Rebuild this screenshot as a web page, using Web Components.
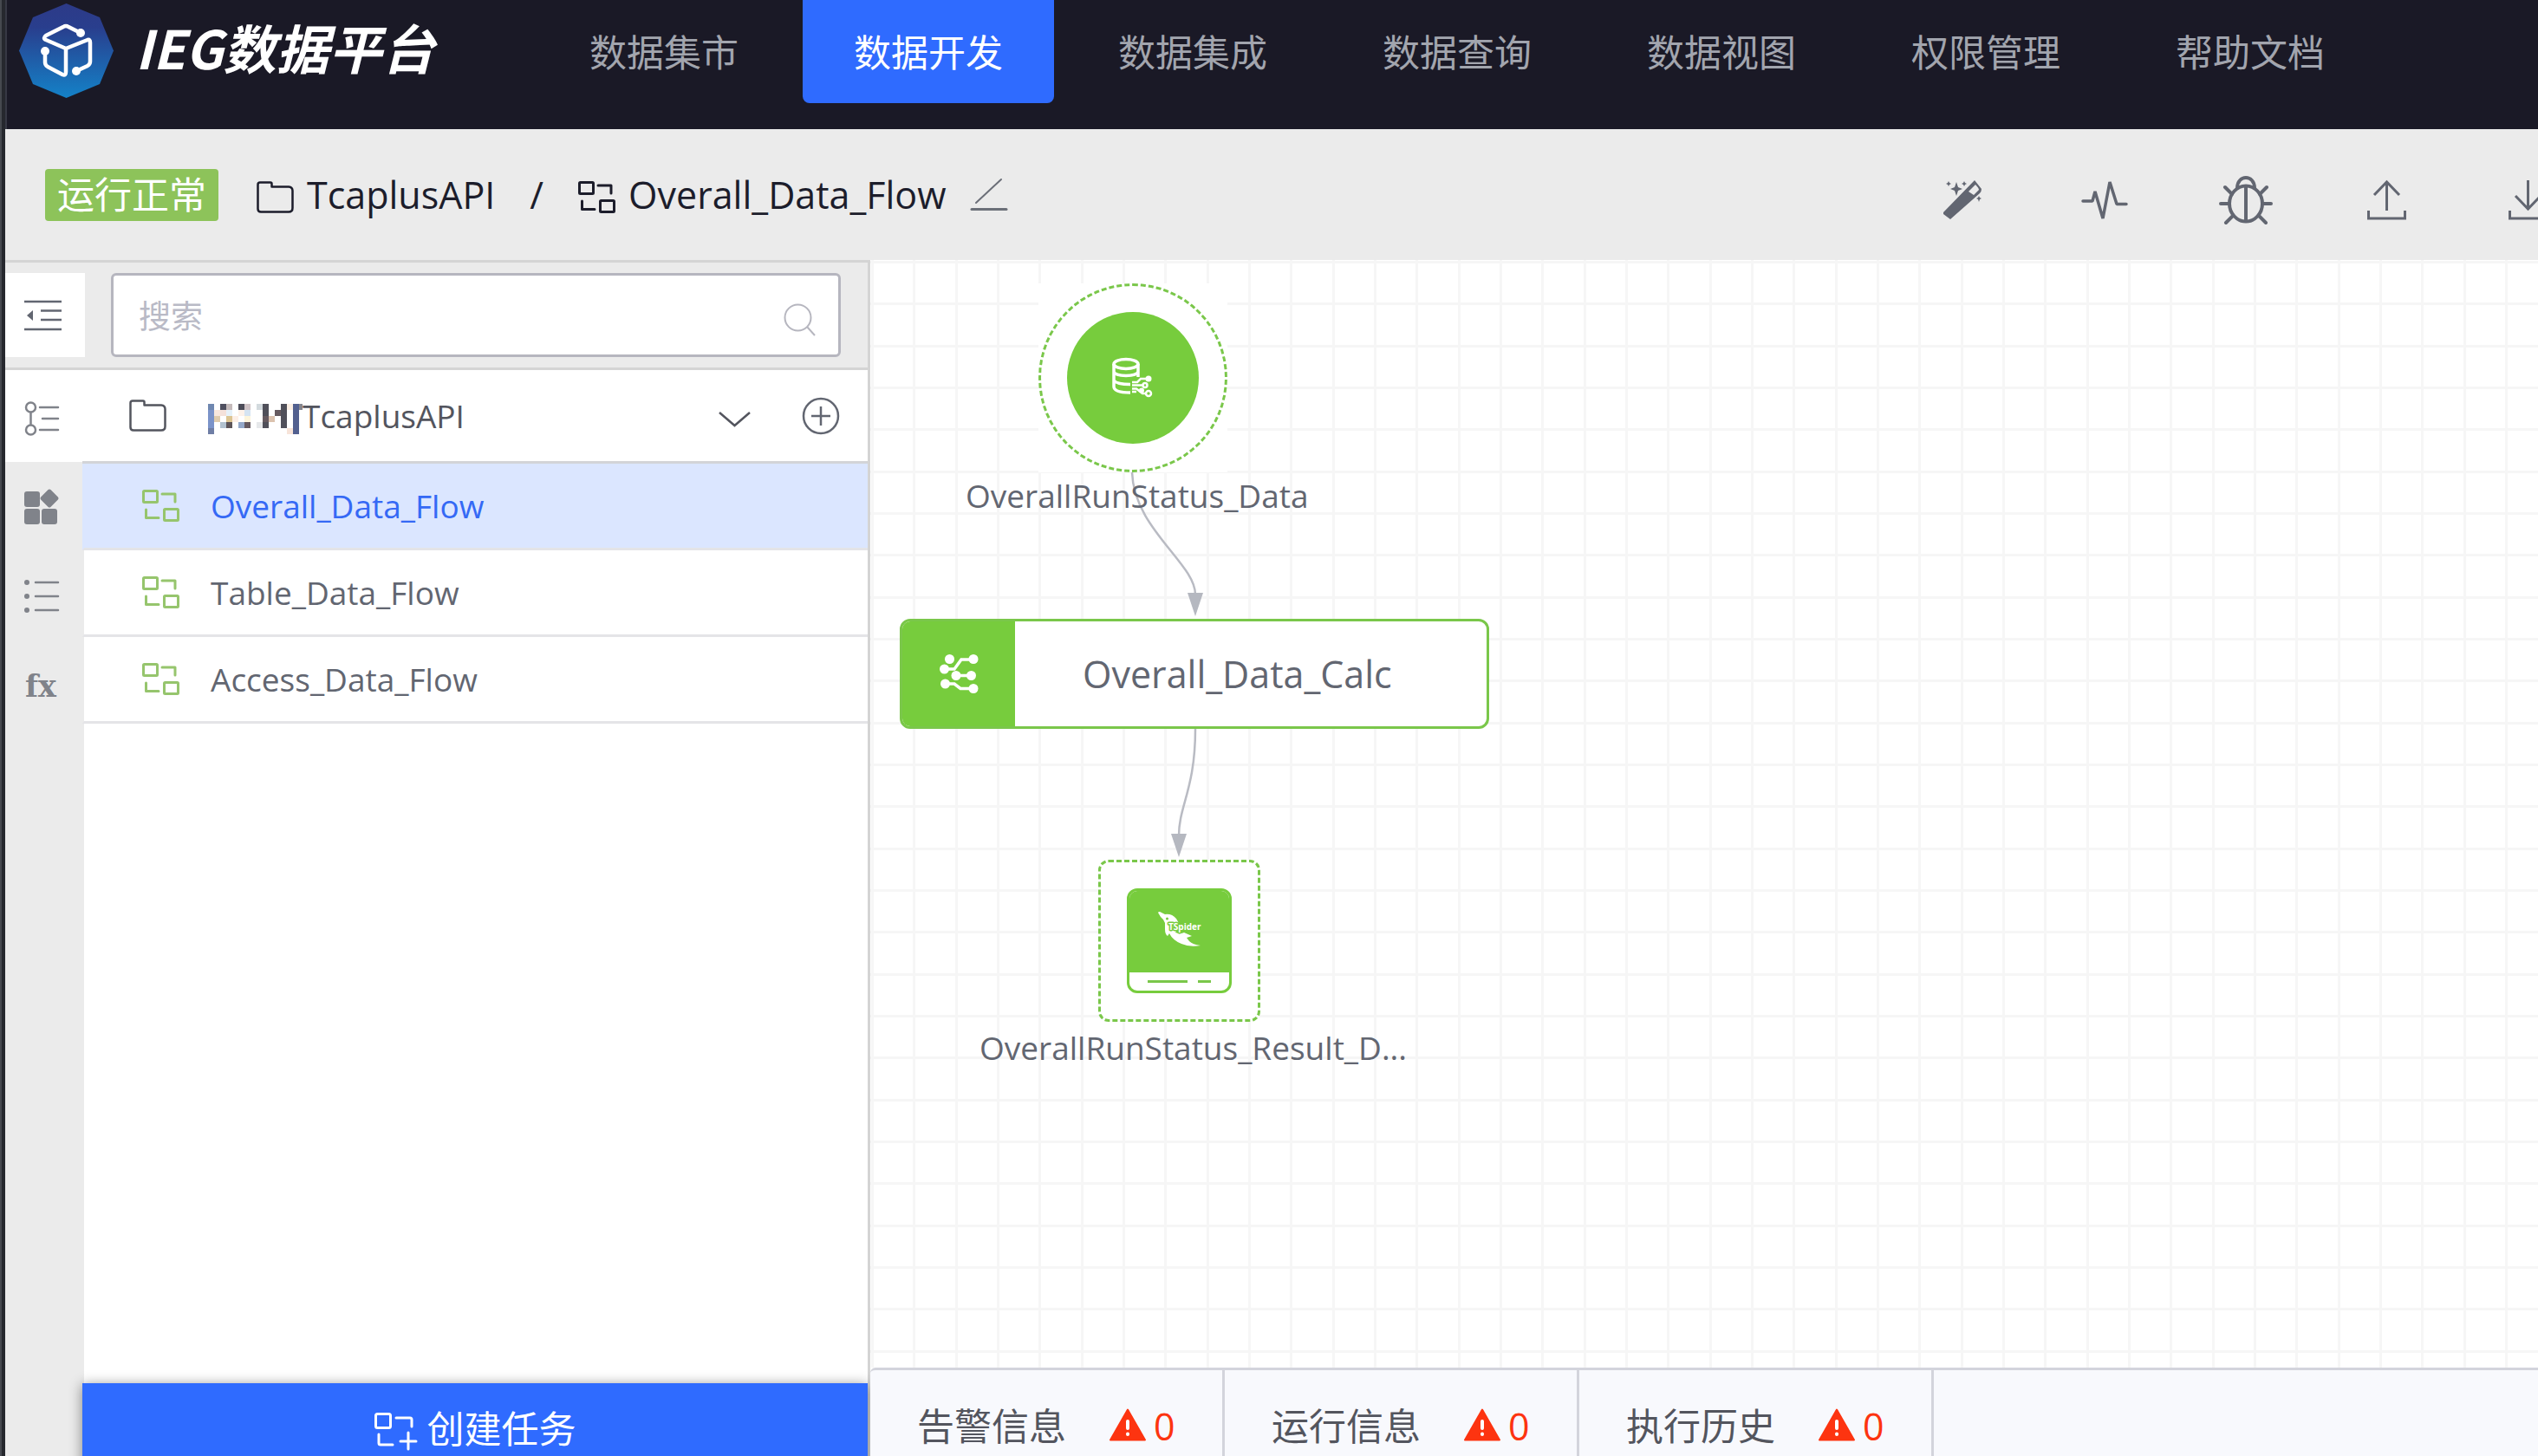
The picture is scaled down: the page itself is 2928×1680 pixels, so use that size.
<!DOCTYPE html>
<html lang="zh-CN">
<head>
<meta charset="utf-8">
<title>IEG数据平台</title>
<style>
  html, body { height: 100%; margin: 0; }
  body {
    box-sizing: border-box;
    padding-left: 6px;
    overflow: hidden;
    font-family: "Open Sans", "Noto Sans CJK SC", sans-serif;
    background: linear-gradient(90deg, #46494f 0 2px, #26282e 2px 6px, #ffffff 6px);
  }
</style>
</head>
<body>
<dp-app></dp-app>

<script>
const ICONS = {
  logo: [109, 109, `<defs><linearGradient id="g" x1="0" y1="0" x2="0" y2="1"><stop offset="0" stop-color="#2d3a88"/><stop offset=".25" stop-color="#293e8d"/><stop offset="1" stop-color="#1482c8"/></linearGradient></defs>
    <path fill="url(#g)" d="M54.500 0 93 16 109 54.500 93 93 54.500 109 16 93 0 54.500 16 16Z"/>
    <g fill="none" stroke="#fff" stroke-width="4.500" stroke-linejoin="round"><path d="M71 34 57 27Q54 25 51 27L31 37Q27 40 31 42L54 52 79 42Q82 41 82 45V67Q82 70 79 72L66 78"/><path d="M54 52V79Q54 84 50 82L33 73Q30 71 30 68V55"/></g>
    <g fill="#fff"><circle cx="71" cy="34" r="5"/><circle cx="30" cy="55" r="5"/><circle cx="66" cy="78" r="5"/></g>`],
  folder: [43, 37, `<path fill="none" stroke="currentColor" stroke-width="2.500" stroke-linejoin="round" d="M4 1.500H16Q17.500 1.500 17.500 3V6.500H37Q41.500 7 41.500 11V31Q41.500 35.500 37 35.500H5Q1.500 35.500 1.500 32V4Q1.500 1.500 4 1.500Z"/>`],
  flow: [43, 37, `<g fill="none" stroke="currentColor" stroke-width="3" stroke-linejoin="round" stroke-linecap="round"><rect x="1.500" y="1.500" width="16" height="13" rx="1"/><path d="M23 5H38V14M4.500 23V32.500H19"/><rect x="25.500" y="22.500" width="16" height="13" rx="1"/></g>`],
  flowadd: [49, 43, `<g fill="none" stroke="currentColor" stroke-width="3" stroke-linejoin="round" stroke-linecap="round"><rect x="1.500" y="1.500" width="17" height="16" rx="2"/><path d="M25 6H41Q43 6 43 8V16M5 25V35Q5 37 7 37H21M39 23V42M30 33H48"/></g>`],
  pen: [42, 37, `<g fill="none" stroke="#6b6f78" stroke-linecap="round"><path stroke-width="2" d="M6 28 35 1"/><path stroke-width="3" d="M1 35.500H41"/></g>`],
  wand: [45, 46, `<g fill="currentColor"><path fill-rule="evenodd" d="M36 0 44 10Q44 13 42 15L8 45 0 39 0 37ZM29 13 35 17 41 11Q41 9 37 5Z"/><path d="M15 2 17 8 22 10 17 12 15 18 13 12 8 10 13 8Z"/><path d="M6 1 7 3 9 4 7 5 6 7 5 5 3 4 5 3ZM24 1 25 3 27 4 25 5 24 7 23 5 21 4 23 3ZM41 18 42 20 44 21 42 22 41 25 40 22 38 21 40 20Z"/></g>`],
  pulse: [54, 48, `<path fill="none" stroke="currentColor" stroke-width="3.500" stroke-linejoin="bevel" stroke-linecap="round" d="M2 25H13L16 14 25 45 33 3 41 28.500H52"/>`],
  bug: [62, 56, `<g fill="none" stroke="currentColor" stroke-width="4" stroke-linecap="round"><ellipse cx="31" cy="32" rx="19" ry="20.500"/><path d="M31 12V52M21 14C21-2 41-2 41 14M2 32H11M51 32H60M7 13 15 21M55 13 47 21M8 54 16 46M54 54 46 46"/></g>`],
  upload: [45, 46, `<path fill="none" stroke="currentColor" stroke-width="3" d="M22.500 3V35M8 17 22.500 2 37 17M1.500 35V44H43.500V35"/>`],
  download: [45, 46, `<path fill="none" stroke="currentColor" stroke-width="3" d="M22.500 0V33M8 18 22.500 33 37 18M1.500 35V44H43.500V35"/>`],
  collapse: [43, 36, `<path fill="none" stroke="currentColor" stroke-width="2.500" d="M0 2H43M19 12.500H43M19 23H43M0 34H43"/><path fill="currentColor" d="M10 12V24L3 18Z"/>`],
  steps: [40, 40, `<g fill="none" stroke="currentColor" stroke-width="2.500"><circle cx="7.500" cy="7" r="5.500"/><circle cx="7.500" cy="33" r="5.500"/><path stroke-linecap="round" d="M7.500 13V27M18 7H39M21 20H39M18 33H39"/></g>`],
  apps: [40, 40, `<g fill="currentColor"><rect y="2" width="18" height="18" rx="3"/><rect y="22" width="18" height="18" rx="3"/><rect x="20" y="22" width="18" height="18" rx="3"/><rect x="21" y="2" width="16" height="16" rx="2" transform="rotate(45 29 10)"/></g>`],
  list: [40, 38, `<g fill="currentColor"><circle cx="3" cy="3" r="3"/><circle cx="3" cy="19" r="3"/><circle cx="3" cy="35" r="3"/></g><path stroke="currentColor" stroke-width="2.500" stroke-linecap="round" d="M13 3H39M13 19H39M13 35H39"/>`],
  search: [37, 38, `<g fill="none" stroke="currentColor" stroke-width="2"><circle cx="16.500" cy="16.500" r="15"/><path d="M27 27 36 37"/></g>`],
  chevron: [37, 20, `<path fill="none" stroke="currentColor" stroke-width="2.500" d="M1 2 18.500 17 36 2"/>`],
  plus: [44, 44, `<g fill="none" stroke="currentColor" stroke-width="2.500"><circle cx="22" cy="22" r="20"/><path d="M22 11V33M11 22H33"/></g>`],
  db: [48, 46, `<g fill="none" stroke="currentColor" stroke-width="3.500"><ellipse cx="16" cy="7" rx="14" ry="5.500"/><path d="M2 7V33C2 38 9 40 21 40M30 7V22M2 16C4 22 28 22 30 16M2 26C5 30 13 30.500 21 30.500"/></g><g fill="none" stroke="currentColor" stroke-width="2.500"><path d="M23 28H29L33 24H40M23 31.500H35M23 35.500H28L35 41H39M23 39H28"/><circle cx="38" cy="31.500" r="2.500"/><circle cx="42" cy="41" r="3"/></g><circle cx="42" cy="24" r="3.500" fill="currentColor"/><circle cx="34" cy="37.500" r="3" fill="currentColor"/>`],
  calc: [45, 46, `<g fill="currentColor"><circle cx="11.500" cy="5.500" r="5.500"/><circle cx="39" cy="5.500" r="5.500"/><circle cx="5.500" cy="17" r="5.500"/><circle cx="19" cy="24.500" r="5.500"/><circle cx="36.500" cy="24.500" r="5.500"/><circle cx="6.500" cy="34" r="5.500"/><circle cx="39" cy="39.500" r="5.500"/></g><path fill="none" stroke="currentColor" stroke-width="3.500" d="M5 17H17L25 6H39M19 24.500H36M6 34H17L24 39.500H39"/>`],
  tspider: [50, 40, `<path fill="#fff" d="M0 1Q1-1 4 1L8 3Q16 2 21 8 24 12 24 16L20 24Q26 26 30 24L39 28 33 30 36 34Q40 38 49 39 36 41 27 37 17 33 13 25L11 28Q8 26 8 20V13Q6 8 3 6Z"/><circle cx="10.500" cy="8" r="1.500" fill="#77cc3d"/><text x="12" y="21" font-family="Open Sans, sans-serif" font-size="10" font-weight="700" fill="#fff" stroke="#77cc3d" stroke-width="3" stroke-linejoin="round" paint-order="stroke">TSpider</text>`],
  warning: [42, 38, `<path fill="#fd3410" stroke="#fd3410" stroke-width="2" stroke-linejoin="round" d="M21 1.500 41 36.500H1Z"/><path stroke="#fff" stroke-width="4" stroke-linecap="round" d="M21 15V23M21 29.500V30"/>`]
};

/* Base class: clones the element's markup into an open shadow root. */
class DpElement extends HTMLElement {
  constructor() {
    super();
    const t = document.createElement('template');
    t.innerHTML = this.render();
    this.attachShadow({ mode: 'open' }).append(t.content.cloneNode(true));
  }
}
const RESET = `*,:host{box-sizing:border-box} button{margin:0;padding:0;border:0;background:none;font:inherit;color:inherit;cursor:pointer} a{color:inherit;text-decoration:none}`;

customElements.define('dp-icon', class extends HTMLElement {
  connectedCallback() {
    if (this.shadowRoot) return;
    const [w, h, body] = ICONS[this.getAttribute('name')];
    this.attachShadow({ mode: 'open' }).innerHTML =
      `<style>:host{display:block;flex:none}svg{display:block;overflow:visible}</style>
       <svg width="${w}" height="${h}" viewBox="0 0 ${w} ${h}" aria-hidden="true">${body}</svg>`;
  }
});

/* Hashed-out project prefix. */
customElements.define('dp-mosaic', class extends DpElement {
  render() {
    const cells = [
      ['#6f87b0',,'#4f5060','#c5bbbb',,'#4c4c58','#cfc3c6',,'#d3dade','#50505a',,,'#50505a','#fbefe4','#52608f','#85868f'],
      ['#7b93c9','#f9e8de','#f4e1da','#e6f1f9',,'#fdf2ea','#d5e4f2',,,'#50505a',,'#665a60','#50505a',,'#52608f'],
      ['#7b93c9','#e0ccae',,'#dcc593','#fdefe6',,'#fdf5dc',,,'#665a60','#dbc2ae',,'#50505a',,'#52608f'],
      ['#7b93c9',,'#b1c1cf','#5d5558',,'#94a8c9','#665a60',,'#e6e8ea','#50505a',,,'#50505a',,'#52608f'],
      ['#6f7ea5',,,,,,,,,,,,,'#f7e4da','#52608f']
    ];
    let r = '';
    cells.forEach((row, y) => row.forEach((c, x) => { r += `<rect x="${x * 7}" y="${y * 7}" width="7" height="7" fill="${c}"/>`; }));
    return `<style>:host{display:block;flex:none}svg{display:block}</style>
      <svg width="109" height="35" viewBox="0 0 109 35" shape-rendering="crispEdges" aria-hidden="true">${r}</svg>`;
  }
});

customElements.define('dp-nav-item', class extends DpElement {
  render() {
    return `<style>${RESET}
      :host{display:block;color:#a2a5ae}
      :host([active]){color:#fff}
      a{display:flex;align-items:center;height:119px;padding:2px 59px 0;border-radius:0 0 8px 8px;font-size:43px;line-height:60px;white-space:nowrap}
      :host([active]) a{background:#2f6bff}
      </style><a href="#"><slot></slot></a>`;
  }
});

customElements.define('dp-header', class extends DpElement {
  render() {
    return `<style>${RESET}
      :host{display:flex;align-items:flex-start;height:149px;background:#1a1926;border-left:2px solid #363843}
      .brand{display:flex;align-items:center;gap:25px;height:116px;padding-left:14px;width:613px;flex:none}
      h1{margin:0;padding-bottom:8px;color:#fff;font:italic 700 61px/80px "Noto Sans CJK SC",sans-serif;white-space:nowrap}
      nav{display:flex;gap:15px}
      </style>
      <div class="brand"><dp-icon name="logo"></dp-icon><h1>IEG数据平台</h1></div>
      <nav>
        <dp-nav-item>数据集市</dp-nav-item><dp-nav-item active>数据开发</dp-nav-item><dp-nav-item>数据集成</dp-nav-item>
        <dp-nav-item>数据查询</dp-nav-item><dp-nav-item>数据视图</dp-nav-item><dp-nav-item>权限管理</dp-nav-item><dp-nav-item>帮助文档</dp-nav-item>
      </nav>`;
  }
});

customElements.define('dp-toolbar', class extends DpElement {
  render() {
    return `<style>${RESET}
      :host{display:flex;align-items:center;height:151px;background:#ebebeb;color:#1c1d2b;font-size:43px;line-height:60px}
      .badge{margin-left:46px;padding:0 14px;border-radius:4px;background:#8dc35a;color:#fff;white-space:nowrap}
      nav{display:flex;align-items:center;gap:40px;margin-left:44px}
      a{display:flex;align-items:center;gap:15px;white-space:nowrap}
      .edit{margin-left:28px}
      dp-icon{margin-top:6px}
      .edit dp-icon{margin-top:0}
      .tools{display:flex;margin-left:auto;margin-right:-70px;color:#626671}
      .tools button{display:flex;justify-content:center;align-items:center;width:163px;height:120px}
      .tools dp-icon{margin-top:12px}
      </style>
      <span class="badge">运行正常</span>
      <nav><a href="#"><dp-icon name="folder"></dp-icon>TcaplusAPI</a><span>/</span><a href="#"><dp-icon name="flow"></dp-icon>Overall_Data_Flow</a></nav>
      <button class="edit" aria-label="重命名"><dp-icon name="pen"></dp-icon></button>
      <div class="tools">
        <button aria-label="美化"><dp-icon name="wand"></dp-icon></button>
        <button aria-label="监控"><dp-icon name="pulse"></dp-icon></button>
        <button aria-label="调试"><dp-icon name="bug"></dp-icon></button>
        <button aria-label="导出"><dp-icon name="upload"></dp-icon></button>
        <button aria-label="导入"><dp-icon name="download"></dp-icon></button>
      </div>`;
  }
});

customElements.define('dp-flow-item', class extends DpElement {
  render() {
    return `<style>${RESET}
      :host{display:block;color:#626671}
      :host([active]){color:#3569f5}
      a{display:flex;align-items:center;gap:36px;height:100px;padding-left:67px;border-left:2px solid #ebebeb;border-bottom:3px solid #e4e4e7;font-size:37px;line-height:52px;white-space:nowrap}
      :host([active]) a{background:#dbe6ff;border-left-color:#dbe6ff}
      dp-icon{color:#96c56d}
      </style><a href="#"><dp-icon name="flow"></dp-icon><slot></slot></a>`;
  }
});

customElements.define('dp-sidebar', class extends DpElement {
  render() {
    return `<style>${RESET}
      :host{display:flex;flex-direction:column;flex:none;width:998px;border-right:3px solid #d4d4d4;background:#fff;color:#626671}
      .top{display:flex;gap:30px;padding:12px 31px 12px 0;background:#ebebeb;border:solid #d4d4d4;border-width:3px 0}
      .fold{display:flex;align-items:center;justify-content:center;width:92px;height:97px;background:#fff}
      .fold dp-icon{margin-right:5px}
      .search{display:flex;align-items:center;flex:1;padding:2px 26px 0 29px;border:3px solid #b6b6bf;border-radius:6px;background:#fff;color:#b6b6bf}
      input{flex:1;min-width:0;border:0;outline:0;padding:0;background:none;font:37px/52px "Open Sans","Noto Sans CJK SC",sans-serif;color:#626671}
      input::placeholder{color:#b9bac6;opacity:1}
      .search dp-icon{margin-top:8px}
      .body{display:flex;flex:1;min-height:0}
      .rail{display:flex;flex-direction:column;width:89px;flex:none;background:#ebebeb;color:#80838a}
      .rail button{display:flex;align-items:center;height:103px;padding-left:22px}
      .rail button.on{height:106px;padding-top:6px;background:#fff}
      .rail .fx{font:700 35px/50px "DejaVu Serif",serif;padding:2px 0 0 23px}
      .panel{display:flex;flex-direction:column;flex:1;min-width:0}
      .group{display:flex;align-items:center;height:108px;padding:0 32px 0 54px;border-bottom:3px solid #d3d4d8;font-size:37px;line-height:52px;color:#53555e}
      .group dp-mosaic{margin:8px 0 0 48px;align-self:center}
      .group .chev{margin-left:auto;padding-top:8px}
      .group .add{margin-left:59px;color:#626671}
      .blank{flex:1;border-left:2px solid #ebebeb}
      .create{display:flex;align-items:center;justify-content:center;gap:12px;flex:none;height:106px;margin-bottom:-22px;background:#2f6bff;color:#fff;font-size:43px;line-height:60px;box-shadow:0 2px 14px rgba(0,0,0,.45)}
      .create dp-icon{margin-top:4px}
      </style>
      <div class="top">
        <button class="fold" aria-label="收起"><dp-icon name="collapse"></dp-icon></button>
        <div class="search"><input type="text" placeholder="搜索" aria-label="搜索"><dp-icon name="search"></dp-icon></div>
      </div>
      <div class="body">
        <div class="rail">
          <button class="on" aria-label="任务"><dp-icon name="steps"></dp-icon></button>
          <button aria-label="组件"><dp-icon name="apps"></dp-icon></button>
          <button aria-label="结果表"><dp-icon name="list"></dp-icon></button>
          <button class="fx">fx</button>
        </div>
        <div class="panel">
          <div class="group"><dp-icon name="folder"></dp-icon><dp-mosaic></dp-mosaic><span>TcaplusAPI</span>
            <button class="chev" aria-label="展开"><dp-icon name="chevron"></dp-icon></button>
            <button class="add" aria-label="新增"><dp-icon name="plus"></dp-icon></button></div>
          <dp-flow-item active>Overall_Data_Flow</dp-flow-item>
          <dp-flow-item>Table_Data_Flow</dp-flow-item>
          <dp-flow-item>Access_Data_Flow</dp-flow-item>
          <div class="blank"></div>
          <button class="create"><dp-icon name="flowadd"></dp-icon>创建任务</button>
        </div>
      </div>`;
  }
});

/* Flow diagram: nodes are placed on a free canvas. */
customElements.define('dp-canvas', class extends DpElement {
  render() {
    const stops = '#f6f6f6 0 3px,transparent 3px 48px,#f6f6f6 48px 51px,transparent 51px 97px,#f6f6f6 97px 100px,transparent 100px';
    return `<style>${RESET}
      :host{display:block;position:relative;flex:1;min-height:0;overflow:hidden;color:#626671;
        background:linear-gradient(90deg,${stops}) 1px 1px/145px 145px,linear-gradient(${stops}) 1px 1px/145px 145px,#fff}
      .edges,.node,.label{position:absolute}
      .edges{left:0;top:0;overflow:visible}
      .label{font-size:37px;line-height:52px;white-space:nowrap}
      .source{left:194px;top:27px;background:#fff}
      .ring{display:flex;align-items:center;justify-content:center;width:218px;height:218px;border:3px dashed #7ac74a;border-radius:50%}
      .disc{display:flex;align-items:center;justify-content:center;width:152px;height:152px;border-radius:50%;background:#77cc3d;color:#fff}
      .calc{display:flex;left:34px;top:414px;width:680px;height:127px;border:3px solid #7ac74a;border-radius:12px;background:#fff;overflow:hidden;font-size:43px;line-height:60px}
      .calc .side{display:flex;align-items:center;justify-content:center;width:130px;background:#77cc3d;color:#fff}
      .calc .name{flex:1;display:flex;align-items:center;padding-left:78px}
      .store{display:flex;align-items:center;justify-content:center;left:263px;top:692px;width:187px;height:187px;border:3px dashed #7ac74a;border-radius:12px;background:#fff}
      .disk{display:flex;flex-direction:column;width:121px;height:121px;border:3px solid #77cc3d;border-radius:12px;overflow:hidden;background:#fff}
      .disk .face{display:flex;align-items:center;justify-content:center;height:94px;padding-bottom:6px;background:#77cc3d}
      .disk .slot{display:flex;justify-content:center;align-items:center;gap:12px;flex:1}
      .slot i{height:3px;width:46px;background:#7ac74a}.slot i+i{width:15px}
      </style>
      <svg class="edges" width="760" height="760" viewBox="0 0 760 760" aria-hidden="true">
        <g fill="none" stroke="#b9bbc3" stroke-width="2.500"><path d="M302 245C304 310 375 350 375 386"/><path d="M375 541C375 610 356 630 356 664"/></g>
        <path fill="#b5b8c0" d="M366 384H384L375 411ZM347 662H365L356 689Z"/>
      </svg>
      <div class="node source"><div class="ring"><div class="disc"><dp-icon name="db"></dp-icon></div></div></div>
      <div class="label" style="left:110px;top:246px">OverallRunStatus_Data</div>
      <div class="node calc"><div class="side"><dp-icon name="calc"></dp-icon></div><div class="name">Overall_Data_Calc</div></div>
      <div class="node store"><div class="disk"><div class="face"><dp-icon name="tspider"></dp-icon></div><div class="slot"><i></i><i></i></div></div></div>
      <div class="label" style="left:126px;top:883px">OverallRunStatus_Result_D...</div>`;
  }
});

customElements.define('dp-status-tab', class extends DpElement {
  render() {
    return `<style>${RESET}
      :host{display:block}
      button{display:flex;align-items:center;width:409px;height:130px;padding-left:54px;border-right:3px solid #d3d4dc;font-size:43px;line-height:60px;color:#53555e;white-space:nowrap}
      dp-icon{margin:0 9px 4px 50px}
      b{font-weight:400;color:#fd3410}
      </style><button><slot></slot><dp-icon name="warning"></dp-icon><b>0</b></button>`;
  }
});

customElements.define('dp-status-bar', class extends DpElement {
  render() {
    return `<style>:host{display:flex;flex:none;margin-bottom:-31px;border-top:3px solid #d3d4dc;border-top-left-radius:6px;background:#f8f9fd}</style>
      <dp-status-tab>告警信息</dp-status-tab><dp-status-tab>运行信息</dp-status-tab><dp-status-tab>执行历史</dp-status-tab>`;
  }
});

customElements.define('dp-app', class extends DpElement {
  render() {
    return `<style>
      :host{display:flex;flex-direction:column;height:100%;overflow:hidden}
      dp-header,dp-toolbar{flex:none}
      main{display:flex;flex:1;min-height:0}
      section{display:flex;flex-direction:column;flex:1;min-width:0}
      </style>
      <dp-header></dp-header><dp-toolbar></dp-toolbar>
      <main><dp-sidebar></dp-sidebar><section><dp-canvas></dp-canvas><dp-status-bar></dp-status-bar></section></main>`;
  }
});
</script>
</body>
</html>
